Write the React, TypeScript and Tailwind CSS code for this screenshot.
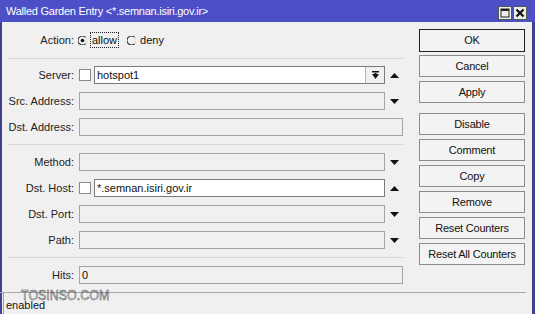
import React from 'react';

const font = { fontFamily: '"Liberation Sans", Arial, sans-serif' };

const DownArrow: React.FC = () => (
  <svg width="9" height="5" viewBox="0 0 9 5">
    <polygon points="0,0 9,0 4.5,5" fill="#111" />
  </svg>
);

const UpArrow: React.FC = () => (
  <svg width="9" height="5" viewBox="0 0 9 5">
    <polygon points="0,5 9,5 4.5,0" fill="#111" />
  </svg>
);

const Label: React.FC<{ text: string }> = ({ text }) => (
  <div className="w-[72px] shrink-0 text-right text-[11px] text-[#222]">{text}</div>
);

const CheckBox: React.FC = () => (
  <div className="w-[12px] h-[12px] shrink-0 bg-white border border-[#8a8a8a] mr-[3px]" />
);

type Side = 'none' | 'up' | 'down';

const Field: React.FC<{
  label: string;
  value?: string;
  enabled?: boolean;
  check?: boolean;
  side?: Side;
  full?: boolean;
  picker?: boolean;
}> = ({ label, value, enabled, check, side = 'none', full, picker }) => (
  <div className="flex items-center h-[18px]">
    <Label text={label} />
    <div className="flex items-center ml-[5px] w-[324px]">
      {check && <CheckBox />}
      <div
        className={`flex-1 h-[18px] flex items-stretch border ${
          enabled ? 'bg-white border-[#7a7a7a]' : 'bg-[#f0f0f0] border-[#a5a5a5]'
        }`}
      >
        <div className="flex-1 pl-[2px] text-[11px] leading-[16px] text-[#111] truncate">{value}</div>
        {picker && (
          <div className="w-[19px] border-l border-[#b5b5b5] bg-[#f0f0f0] flex items-center justify-center">
            <svg width="9" height="9" viewBox="0 0 9 9">
              <rect x="1" y="0" width="7" height="1.5" fill="#111" />
              <polygon points="1,3 8,3 4.5,8" fill="#111" />
              <rect x="3.5" y="2" width="2" height="2" fill="#111" />
            </svg>
          </div>
        )}
      </div>
      {!full && (
        <div className="w-[18px] shrink-0 flex items-center justify-center">
          {side === 'up' && <UpArrow />}
          {side === 'down' && <DownArrow />}
        </div>
      )}
    </div>
  </div>
);

const Separator: React.FC = () => <div className="ml-[6px] w-[395px] h-px bg-[#d6d6d6]" />;

const Btn: React.FC<{ text: string; primary?: boolean; className?: string }> = ({ text, primary, className }) => (
  <button
    className={`w-[106px] h-[22px] flex items-center justify-center text-[11px] tracking-[-0.2px] text-[#111] bg-[#f3f3f3] border ${
      primary ? 'border-[#222] h-[23px]' : 'border-[#8c8c8c]'
    } ${className ?? ''}`}
  >
    {text}
  </button>
);

const Radio: React.FC<{ checked?: boolean }> = ({ checked }) => (
  <svg width="9" height="9" viewBox="0 0 10 10" className="shrink-0">
    <path d="M8.5 1.5 A5 5 0 1 0 8.5 8.5" fill="none" stroke="#333" strokeWidth="1.2" />
    <path d="M8.5 1.5 A5 5 0 0 1 8.5 8.5" fill="none" stroke="#d8d8d8" strokeWidth="1.2" />
    {checked && <circle cx="5" cy="5" r="2" fill="#111" />}
  </svg>
);

const App: React.FC = () => {
  const buttons = ['Comment', 'Copy', 'Remove', 'Reset Counters', 'Reset All Counters'];

  return (
    <div className="w-[535px] h-[314px] overflow-hidden bg-[#f0f0f0] flex flex-col relative" style={font}>
      {/* title bar */}
      <div className="h-[22px] shrink-0 bg-[#4c4fc6] flex items-center pl-[6px] pr-[8px]">
        <div className="flex-1 text-white text-[11px] tracking-[-0.25px]">Walled Garden Entry &lt;*.semnan.isiri.gov.ir&gt;</div>
        <div className="flex gap-[1px] mt-[3px]">
          <div className="w-[14px] h-[14px] bg-[#eeeeee] border border-[#555] flex items-center justify-center">
            <svg width="10" height="10" viewBox="0 0 10 10">
              <rect x="1" y="1" width="8" height="8" fill="none" stroke="#222" strokeWidth="1" />
              <rect x="1" y="1" width="8" height="2" fill="#222" />
            </svg>
          </div>
          <div className="w-[14px] h-[14px] bg-[#eeeeee] border border-[#555] flex items-center justify-center">
            <svg width="10" height="10" viewBox="0 0 10 10">
              <path d="M1.5 1.5 L8.5 8.5 M8.5 1.5 L1.5 8.5" stroke="#111" strokeWidth="2.2" />
            </svg>
          </div>
        </div>
      </div>

      {/* body */}
      <div className="flex-1 flex flex-col border-l-2 border-r-[3px] border-[#3e418f]">
        <div className="h-[270px] flex">
          <div className="w-[401px] flex flex-col">
            <div className="mt-[9px] h-[18px] flex items-center">
              <Label text="Action:" />
              <div className="ml-[4px] flex items-center text-[11px] text-[#111]">
                <Radio checked />
                <span className="ml-[3px] px-[1px] border border-dotted border-[#222] leading-[14px] h-[16px]">allow</span>
                <div className="ml-[8px]">
                  <Radio />
                </div>
                <span className="ml-[4px]">deny</span>
              </div>
            </div>
            <div className="mt-[9px]">
              <Separator />
            </div>
            <div className="mt-[7px] flex flex-col gap-[8px]">
              <Field label="Server:" value="hotspot1" enabled check side="up" picker />
              <Field label="Src. Address:" side="down" />
              <Field label="Dst. Address:" full />
            </div>
            <div className="mt-[8px]">
              <Separator />
            </div>
            <div className="mt-[8px] flex flex-col gap-[8px]">
              <Field label="Method:" side="down" />
              <Field label="Dst. Host:" value="*.semnan.isiri.gov.ir" enabled check side="up" />
              <Field label="Dst. Port:" side="down" />
              <Field label="Path:" side="down" />
            </div>
            <div className="mt-[8px]">
              <Separator />
            </div>
            <div className="mt-[8px]">
              <Field label="Hits:" value="0" full />
            </div>
          </div>

          <div className="ml-[16px] pt-[7px] flex flex-col">
            <Btn text="OK" primary />
            <Btn text="Cancel" className="mt-[3px]" />
            <Btn text="Apply" className="mt-[4px]" />
            <Btn text="Disable" className="mt-[10px]" />
            {buttons.map((b) => (
              <Btn key={b} text={b} className="mt-[4px]" />
            ))}
          </div>
        </div>

        {/* status bar */}
        <div className="flex-1 flex flex-col">
          <div className="w-[526px] h-px bg-[#a8a8a8] -ml-[2px]" />
          <div className="flex-1 ml-[1px] w-[110px] border-l border-[#a0a0a0] pl-[2px] pt-[4px] text-[11px] text-[#111]">
            enabled
          </div>
        </div>
      </div>

      {/* watermark */}
      <div className="absolute left-[21px] top-[284px] origin-left scale-x-[0.83] text-[15px] text-transparent [-webkit-text-stroke:0.5px_#333] pointer-events-none">
        TOSINSO.COM
      </div>
    </div>
  );
};

export default App;
